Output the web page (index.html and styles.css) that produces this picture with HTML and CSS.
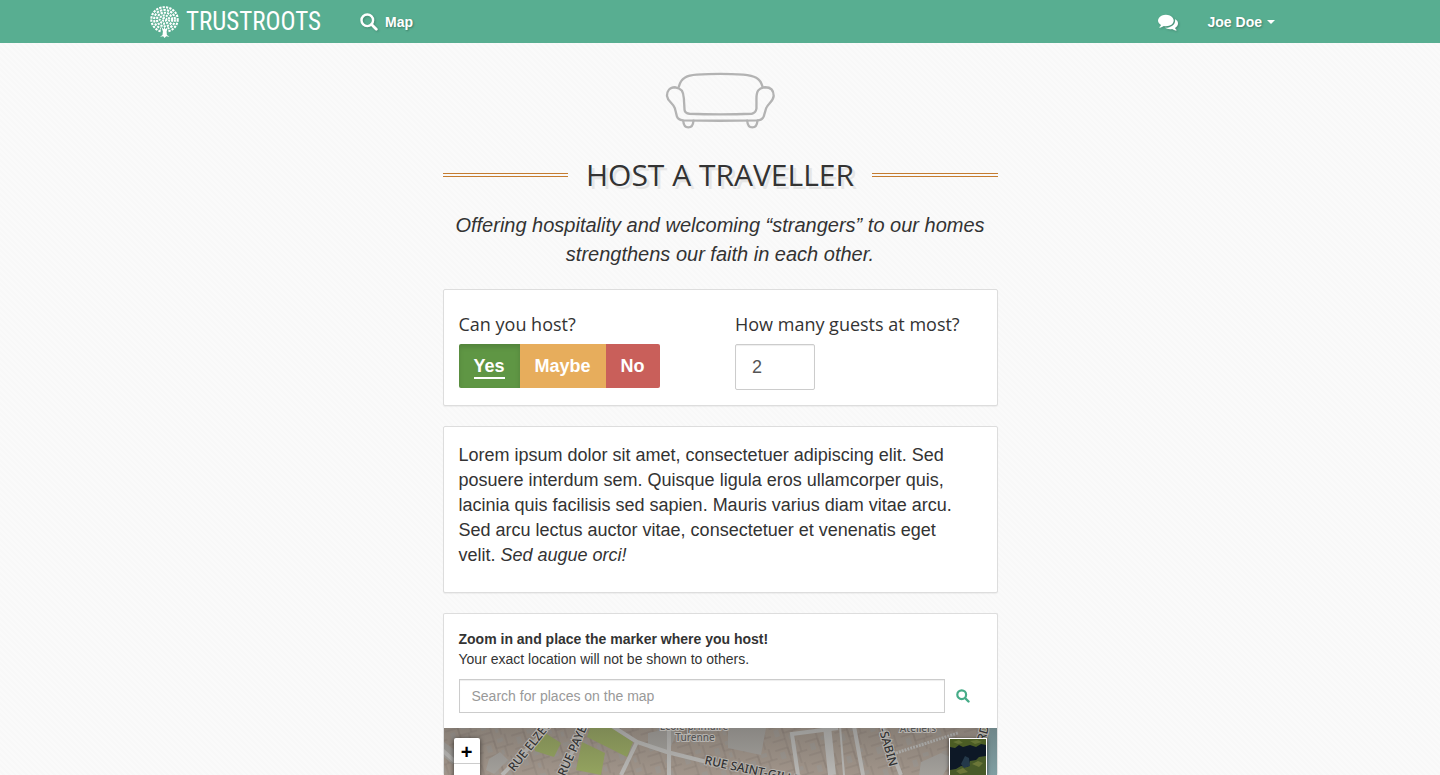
FILE: index.html
```html
<!DOCTYPE html>
<html lang="en">
<head>
<meta charset="utf-8">
<title>Host a traveller - Trustroots</title>
<link rel="stylesheet" href="styles.css">
</head>
<body>
<header class="navbar">
  <div class="container navbar-inner">
    <a class="brand" href="#">
      <svg class="brand-tree" viewBox="0 0 30 32" aria-hidden="true">
        <g fill="none" stroke="#fff" stroke-width="2.1">
          <ellipse cx="14.500" cy="13.500" rx="13.200" ry="12.300" stroke-dasharray="2.3 1.1"/>
          <ellipse cx="14.500" cy="13.500" rx="10.400" ry="9.500" stroke-dasharray="2.4 1.1"/>
          <ellipse cx="14.500" cy="13.500" rx="7.600" ry="6.800" stroke-dasharray="2.3 1"/>
          <ellipse cx="14.500" cy="13.500" rx="4.800" ry="4.100" stroke-dasharray="2.1 1"/>
          <ellipse cx="14.500" cy="13.500" rx="2" ry="1.500" stroke-dasharray="2 .9"/>
        </g>
        <path d="M11 21.500h7v6h-7z" fill="#58ae91"/>
        <path d="M11.500 21l2.200 2.200L14.500 20l.9 3.200L18 21l-1.400 4.400.3 3.600 2.600 1.700-3.300-.4-1.700 1.600-1.300-1.600-3.200.4 2.500-1.800.4-3.500z" fill="#fff"/>
      </svg>
      <span class="brand-name">TRUSTROOTS</span>
    </a>
    <a class="nav-link nav-map" href="#">
      <svg class="nav-search" viewBox="0 0 18 18" aria-hidden="true"><circle cx="7.3" cy="7.3" r="5.800" fill="none" stroke="#fff" stroke-width="2.4"/><path d="M11.6 11.6l4.7 4.7" stroke="#fff" stroke-width="2.8" stroke-linecap="round"/></svg>
      <span>Map</span>
    </a>
    <nav class="nav-right" aria-label="Account">
      <a class="nav-link" href="#" aria-label="Messages">
        <svg class="nav-chat" viewBox="0 0 1792 1792" aria-hidden="true"><path fill="#fff" d="M1408 768q0 139-94 257t-256.500 186.500-353.500 68.500q-86 0-176-16-124 88-278 128-36 9-86 16h-3q-11 0-20.500-8t-11.500-21q-1-3-1-6.500t.5-6.500 2-6l2.500-5 3.500-5.500 4-5 4.500-5 4-4.500q5-6 23-25t26-29.500 22.500-29 25-38.500 20.500-44q-124-72-195-177t-71-224q0-139 94-257t256.500-186.500 353.500-68.500 353.500 68.500 256.500 186.500 94 257zm384 256q0 120-71 224.500t-195 176.500q10 24 20.500 44t25 38.500 22.500 29 26 29.500 23 25q1 1 4 4.500t4.500 5 4 5 3.500 5.500l2.500 5 2 6 .5 6.500-1 6.500q-3 14-13 22t-22 7q-50-7-86-16-154-40-278-128-90 16-176 16-271 0-472-132 58 4 88 4 161 0 309-45t264-129q125-92 192-212t67-254q0-77-23-152 129 71 204 178t75 230z"/></svg>
      </a>
      <button class="nav-link" type="button">Joe Doe <span class="caret"></span></button>
    </nav>
  </div>
</header>
<main class="page">
  <svg class="sofa" viewBox="45 36 330 172" aria-hidden="true">
    <g fill="none" stroke="#b3b3b3" stroke-width="7" stroke-linecap="round" stroke-linejoin="round">
      <path d="M86 80C92 52 112 46 140 44Q210 39 280 44C314 47 332 54 338 80"/>
      <path d="M74 82C58 82 50 94 50 108C52 126 68 128 74 146L80 170Q83 180 98 182Q210 184 322 182Q338 181 342 170L349 146C355 130 371 125 372 108C372 90 362 82 346 82C326 84 320 94 320 116L320 146Q318 160 306 162Q210 166 118 162Q104 160 103 150L101 116C100 95 94 84 74 82Z"/>
      <path d="M99 183C101 210 128 210 130 183M292 183C294 210 321 210 323 183"/>
    </g>
  </svg>
  <h1 class="title"><span class="title-text">HOST A TRAVELLER</span></h1>
  <p class="lead">Offering hospitality and welcoming “strangers” to our homes strengthens our faith in each other.</p>

  <section class="panel hosting">
    <fieldset class="field">
      <legend class="label">Can you host?</legend>
      <div class="choices">
        <label class="choice choice-yes"><input class="choice-input" type="radio" name="host" checked><span class="choice-text">Yes</span></label>
        <label class="choice choice-maybe"><input class="choice-input" type="radio" name="host"><span class="choice-text">Maybe</span></label>
        <label class="choice choice-no"><input class="choice-input" type="radio" name="host"><span class="choice-text">No</span></label>
      </div>
    </fieldset>
    <div class="field">
      <label class="label" for="guests">How many guests at most?</label>
      <input class="guests" id="guests" type="text" inputmode="numeric" value="2">
    </div>
  </section>

  <section class="panel description">
    <p class="description-text">Lorem ipsum dolor sit amet, consectetuer adipiscing elit. Sed posuere interdum sem. Quisque ligula eros ullamcorper quis, lacinia quis facilisis sed sapien. Mauris varius diam vitae arcu. Sed arcu lectus auctor vitae, consectetuer et venenatis eget velit. <em>Sed augue orci!</em></p>
  </section>

  <section class="panel location">
    <div class="location-head">
      <label class="location-label" for="place"><strong>Zoom in and place the marker where you host!</strong><br>Your exact location will not be shown to others.</label>
      <div class="search">
        <input class="search-input" id="place" type="text" placeholder="Search for places on the map">
        <button class="search-button" type="button" aria-label="Search">
          <svg class="search-icon" viewBox="0 0 14 14" aria-hidden="true"><circle cx="5.700" cy="5.700" r="4.400" fill="none" stroke="#46ac88" stroke-width="2.200"/><path d="M9 9l3.500 3.500" stroke="#46ac88" stroke-width="2.400" stroke-linecap="round"/></svg>
        </button>
      </div>
    </div>
    <div class="map">
      <svg class="map-tiles" viewBox="0 0 553 47" preserveAspectRatio="xMidYMin slice" role="img" aria-label="Street map">
        <defs>
          <linearGradient id="shade" x1="0" y1="0" x2="0" y2="1"><stop offset="0" stop-color="#333" stop-opacity=".25"/><stop offset="1" stop-color="#333" stop-opacity=".02"/></linearGradient>
          <pattern id="plots" width="31" height="23" patternUnits="userSpaceOnUse" patternTransform="rotate(-17)"><path d="M0 4h13v8h18M13 0v23M22 12v11M0 18h13M25 0v12" fill="none" stroke="#8c8177" stroke-width=".7"/><path d="M4 7h5v7H4zM17 15h3v5h-3zM16 3h6v4h-6z" fill="#a09a93"/></pattern>
        </defs>
        <rect width="553" height="47" fill="#a3978c"/>
        <rect width="553" height="47" fill="url(#plots)"/>
        <g fill="#a5a29d">
          <path d="M0 14l16 12-7 10-9-7zM45 31l11-7 8 8-14 14-8-4zM204 5l24-5 4 6-8 20-20-6zM284 0h38l-5 27-33-7zM477 34l20-9 12 5-10 17h-24z"/>
        </g>
        <g fill="#96a660">
          <path d="M91 16l10-11 16 10-7 14-19-6z"/>
          <path d="M143 9l3-9h22l21 14-6 15z"/>
          <path d="M138 14l23 11-4 22-25-5z"/>
        </g>
        <g fill="none" stroke="#bbbab7">
          <path d="M58 47L108-4M116 47L142-2M168-2l25 16 30 10 56 14M193 14L177 47M225-2v49M-4 20l30 27" stroke-width="4"/>
          <path d="M383-2l5 49" stroke-width="8"/>
          <path d="M410-2l9 49M354 47L348 6l46-6M438-2l19 49" stroke-width="4"/>
          <path d="M452 25l62-20" stroke-width="3" stroke-dasharray="2 1"/>
          <path d="M396-2l4 49" stroke-width="2"/>
        </g>
        <path d="M545 0h8v47h-13z" fill="#82a1a5"/>
        <path d="M542 0l-5 47" stroke="#94a96e" stroke-width="3"/>
        <rect width="553" height="47" fill="url(#shade)"/>
        <g class="map-text">
          <text transform="translate(70 44) rotate(-51)">RUE ELZÉVIR</text>
          <text transform="translate(121 49) rotate(-66)">RUE PAYENNE</text>
          <text class="map-place" x="250" y="2" text-anchor="middle">École primaire</text>
          <text class="map-place" x="251" y="13" text-anchor="middle">Turenne</text>
          <text transform="translate(260 36) rotate(12)">RUE SAINT-GILLES</text>
          <text transform="translate(433 -5) rotate(74)">T-SABIN</text>
          <text class="map-place" x="474" y="4" text-anchor="middle">Ateliers</text>
          <text transform="translate(541 14) rotate(-75)">RD</text>
        </g>
      </svg>
      <div class="zoom"><button class="zoom-button" type="button" aria-label="Zoom in">+</button><button class="zoom-button" type="button" aria-label="Zoom out">−</button></div>
      <button class="layer" type="button" aria-label="Satellite view">
        <svg class="layer-image" viewBox="0 0 36 36" aria-hidden="true"><rect width="36" height="36" fill="#0d1826"/><path d="M0 0h36v6l-5-1-5 3-6-2-7 2-4-2-4 3-5-1z" fill="#4b5c24"/><path d="M3 3l6-2 4 3-5 1zM20 2l7-1 5 2-7 2z" fill="#667436"/><path d="M36 17l-7 1-3 3-6 1-2 6-7-1-5 3-6 1v5h36z" fill="#485a28"/><path d="M22 25l6-3 5 2-4 4zM6 32l7-3 5 4-8 2z" fill="#6b7638"/><path d="M15 17l4 2 1 8-6 2-3-4z" fill="#24394a"/></svg>
      </button>
    </div>
  </section>
</main>
</body>
</html>
```
FILE: styles.css
```css
* { box-sizing: border-box; }

body {
  margin: 0;
  height: 100vh;
  overflow: hidden;
  display: flex;
  flex-direction: column;
  color: #333;
  font: 14px/20px "Liberation Sans", Arial, sans-serif;
  background: repeating-linear-gradient(45deg, #fafafa 0 2px, #f8f8f8 2px 4px);
}

button, input { font: inherit; color: inherit; }

.navbar { flex: none; background: #58ae91; color: #fff; }
.container { max-width: 1170px; margin: 0 auto; padding: 0 15px; }
.navbar-inner { display: flex; align-items: center; height: 43px; }
.brand { display: flex; align-items: center; gap: 6px; margin-right: 38px; color: #fff; text-decoration: none; }
.brand-tree { width: 30px; height: 32px; }
.brand-name { width: 136px; font: 25px/43px "Roboto Condensed", "Liberation Sans Narrow", sans-serif; }
.nav-link {
  display: flex;
  align-items: center;
  gap: 5px;
  padding: 0;
  border: 0;
  background: none;
  color: #fff;
  font-weight: bold;
  text-decoration: none;
  text-shadow: 1px 1px 2px rgba(0, 0, 0, .3);
}
.nav-map { gap: 7px; }
.nav-search { width: 18px; height: 18px; filter: drop-shadow(1px 1px 1px rgba(0, 0, 0, .2)); }
.nav-chat { width: 20px; height: 20px; filter: drop-shadow(1px 1px 1px rgba(0, 0, 0, .2)); }
.nav-right { display: flex; gap: 30px; margin-left: auto; padding-right: 15px; }
.caret { border: 4px solid transparent; border-top-color: #fff; border-bottom: 0; }

.page {
  flex: 1;
  min-height: 0;
  display: flex;
  flex-direction: column;
  width: 100%;
  max-width: 555px;
  margin: 0 auto;
}
.sofa { flex: none; align-self: center; width: 110px; height: 57px; margin-top: 29px; }

.title { display: flex; align-items: center; gap: 18px; margin: 24px 0 0; font: 30px/44px "Open Sans", sans-serif; }
.title::before, .title::after { content: ""; flex: 1; height: 2px; border: solid #c57c30; border-width: 1px 0; }
.title-text { text-shadow: 3px 3px 0 #e6e6e6; }
.lead { margin: 14px 0 20px; font-size: 20px; line-height: 29px; font-style: italic; text-align: center; }

.panel { flex: none; margin-bottom: 20px; background: #fff; border: 1px solid #ddd; border-radius: 2px; box-shadow: 0 1px 1px rgba(0, 0, 0, .05); }
.hosting { display: grid; grid-template-columns: 1fr 1fr; padding: 15px 0; }
.field { min-width: 0; margin: 0; padding: 0 15px; border: 0; }
.label { display: block; padding: 8px 0; font: 18px/23px "Open Sans", sans-serif; }
.choices { display: flex; width: max-content; border-radius: 2px; overflow: hidden; color: #fff; font-size: 18px; font-weight: bold; }
.choice { position: relative; padding: 11px 15px; line-height: 22px; cursor: pointer; }
.choice-input { position: absolute; opacity: 0; margin: 0; }
.choice-text { display: block; }
.choice-yes { background: #5f9644; box-shadow: inset 0 3px 5px rgba(0, 0, 0, .13); }
.choice-maybe { background: #e7ad5c; }
.choice-no { background: #c95f5a; }
.choice-input:checked + .choice-text { border-bottom: 2px solid #fff; margin-bottom: -2px; }
.guests { display: block; width: 80px; height: 46px; padding: 0 16px; border: 1px solid #ccc; border-radius: 2px; background: #fff; color: #555; font-size: 18px; box-shadow: inset 0 1px 1px rgba(0, 0, 0, .07); }

.description { padding: 16px 24px 24px 15px; }
.description-text { margin: 0; font-size: 18px; line-height: 25px; }

.location { flex: 1; min-height: 0; display: flex; flex-direction: column; margin-bottom: 0; border-bottom: 0; }
.location-head { padding: 15px; }
.location-label { display: block; margin-bottom: 10px; }
.search { display: flex; }
.search-input { flex: 1; min-width: 0; height: 34px; padding: 0 12px; border: 1px solid #ccc; border-radius: 0; background: #fff; box-shadow: inset 0 1px 1px rgba(0, 0, 0, .07); }
.search-input::placeholder { color: #999; opacity: 1; }
.search-button { display: flex; align-items: center; justify-content: center; width: 37px; padding: 0; border: 0; background: none; }
.search-icon { width: 14px; height: 14px; }

.map { position: relative; flex: 1; min-height: 0; overflow: hidden; background: #a3978c; }
.map-tiles { display: block; width: 100%; min-height: 100%; }
.map-text { font: 500 12px "Noto Sans", sans-serif; fill: #333; paint-order: stroke; stroke: #b5b2ae; stroke-width: 2px; }
.map-place { font-size: 10px; fill: #555; }
.zoom { position: absolute; top: 10px; left: 10px; width: 26px; background: #fff; border-radius: 2px; box-shadow: 0 1px 5px rgba(0, 0, 0, .65); }
.zoom-button { display: block; width: 100%; height: 26px; padding: 0; border: 0; border-bottom: 1px solid #ccc; background: none; color: #000; font: bold 20px/28px "Liberation Sans", sans-serif; }
.layer { position: absolute; top: 10px; right: 10px; width: 38px; height: 38px; padding: 0; border: 1px solid #fff; background: #111d2e; box-shadow: 0 1px 4px rgba(0, 0, 0, .6); }
.layer-image { display: block; width: 100%; height: 100%; }
```
